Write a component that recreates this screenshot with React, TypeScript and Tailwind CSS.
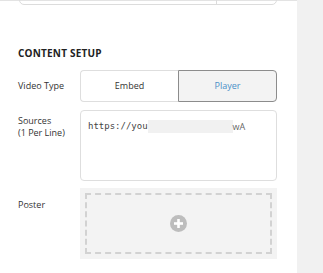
const font = { fontFamily: '"Open Sans", "Noto Sans", sans-serif' };

export default function App() {
  return (
    <div className="flex w-[323px] h-[273px] overflow-hidden bg-white" style={font}>
      <div className="w-[297px] shrink-0 bg-white">
        <div className="h-[26px] border-b border-[#e3e3e3] px-[19px]">
          <div className="flex h-[30px] -mt-[25px] w-[258px] rounded-[5px] border border-[#dcdcdc]">
            <div className="w-[197px] border-r border-[#dcdcdc]" />
            <div className="flex-1" />
          </div>
        </div>

        <div className="pl-[18px] pr-[20px] pt-[46px]">
          <h2 className="text-[10px] font-bold tracking-[0.2px] text-[#222] leading-[12px]">
            CONTENT SETUP
          </h2>

          <div className="mt-[11px] flex items-center">
            <span className="w-[62px] text-[9px] text-[#333]">Video Type</span>
            <div className="flex h-[32px] w-[197px]">
              <button className="flex-1 rounded-l-[4px] border border-r-0 border-[#dedede] bg-white text-[9px] text-[#333]">
                Embed
              </button>
              <button className="flex-1 rounded-r-[4px] border border-[#8c8c8c] bg-[#f3f3f3] text-[9px] text-[#4a90c8]">
                Player
              </button>
            </div>
          </div>

          <div className="mt-[8px] flex items-start">
            <span className="w-[62px] pt-[5px] text-[9px] leading-[12px] text-[#333]">
              Sources
              <br />
              (1 Per Line)
            </span>
            <div className="h-[71px] w-[197px] rounded-[4px] border border-[#dedede] px-[7px] pt-[9px]">
              <div className="flex items-center text-[9px] text-[#444]" style={{ fontFamily: '"DejaVu Sans Mono", monospace' }}>
                <span>https://you</span>
                <span className="h-[13px] w-[85px] bg-[#f1f1f1]" />
                <span className="text-[#666]" style={font}>wA</span>
              </div>
            </div>
          </div>

          <div className="mt-[7px] flex items-start">
            <span className="w-[62px] pt-[10px] text-[9px] text-[#333]">Poster</span>
            <div className="h-[71px] w-[197px] bg-[#f3f3f3] p-[5px]">
              <div className="flex h-full items-center justify-center border-2 border-dashed border-[#d2d2d2]">
                <svg width="17" height="17" viewBox="0 0 17 17">
                  <circle cx="8.5" cy="8.5" r="8.5" fill="#bdbdbd" />
                  <rect x="7.2" y="4" width="2.6" height="9" fill="#fff" />
                  <rect x="4" y="7.2" width="9" height="2.6" fill="#fff" />
                </svg>
              </div>
            </div>
          </div>
        </div>
      </div>
      <div className="flex-1 bg-[#f1f1f1]" />
    </div>
  );
}
